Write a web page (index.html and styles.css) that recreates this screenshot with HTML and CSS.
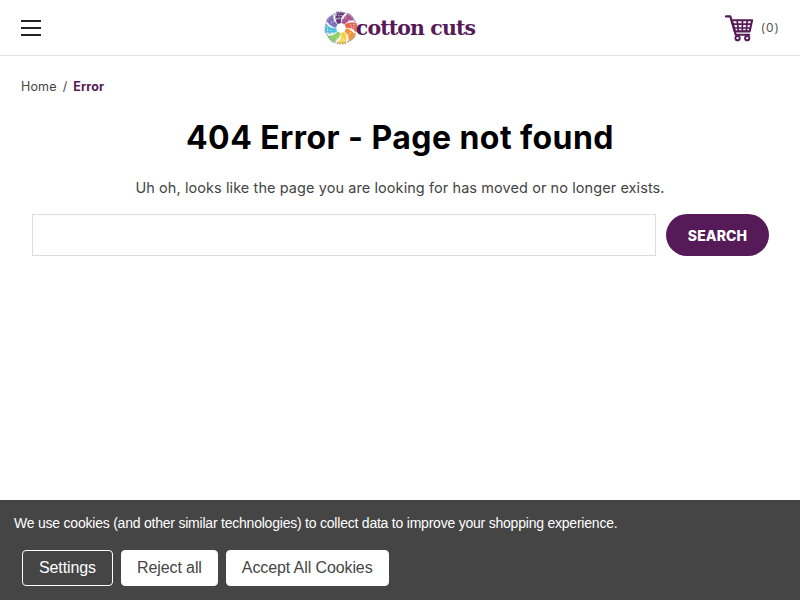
FILE: index.html
```html
<!DOCTYPE html>
<html lang="en">
<head>
<meta charset="utf-8">
<title>404 Error - Page not found</title>
<link rel="stylesheet" href="styles.css">
</head>
<body>
<header class="header">
  <button class="menu" aria-label="Menu"><span></span><span></span><span></span></button>
  <a class="logo" href="#">
    <svg class="wheel" viewBox="0 0 36 36" width="36" height="36" fill="none">
      <g stroke="#fff" stroke-width=".5">
        <path d="M18 13C19 8 22 5 26 3C29 5 31 8 32 11C28 10 24 11 22 15Z" fill="#a9578f"/>
        <path d="M18 13C19 8 22 5 26 3C29 5 31 8 32 11C28 10 24 11 22 15Z" transform="rotate(45 18 18)" fill="#e5654f"/>
        <path d="M18 13C19 8 22 5 26 3C29 5 31 8 32 11C28 10 24 11 22 15Z" transform="rotate(90 18 18)" fill="#f2953c"/>
        <path d="M18 13C19 8 22 5 26 3C29 5 31 8 32 11C28 10 24 11 22 15Z" transform="rotate(135 18 18)" fill="#f6cf44"/>
        <path d="M18 13C19 8 22 5 26 3C29 5 31 8 32 11C28 10 24 11 22 15Z" transform="rotate(180 18 18)" fill="#8fd16a"/>
        <path d="M18 13C19 8 22 5 26 3C29 5 31 8 32 11C28 10 24 11 22 15Z" transform="rotate(225 18 18)" fill="#52bfe0"/>
        <path d="M18 13C19 8 22 5 26 3C29 5 31 8 32 11C28 10 24 11 22 15Z" transform="rotate(270 18 18)" fill="#7f71bd"/>
        <path d="M18 13C19 8 22 5 26 3C29 5 31 8 32 11C28 10 24 11 22 15Z" transform="rotate(315 18 18)" fill="#5f3a78"/>
      </g>
      <circle cx="18" cy="18" r="15.500" stroke="#a79fb0" stroke-width="1.500" stroke-dasharray="1.500 1.200"/>
      <g stroke="#fff" stroke-width=".9" stroke-dasharray="1 1.300">
        <path d="M11 9l12-1M8 13l9-6M13 5l10 1M26 10l3 8M31 14l-1 8M28 22l-5 6M21 29l-8 0M24 30l-9 1M10 25l-3-6M5 23l-1-7"/>
      </g>
    </svg>
    <span class="logo-text">cotton cuts</span>
  </a>
  <a class="cart" href="#">
    <svg class="cart-icon" viewBox="0 0 30 28" width="29" height="28" fill="none" stroke="#561a59">
      <path d="M1 2h4.500l5.500 19h14" stroke-width="2.200" stroke-linecap="round" stroke-linejoin="round"/>
      <path d="M7 6h21l-2.500 11.500H10.300z" stroke-width="2.200" stroke-linejoin="round"/>
      <path d="M12.500 6l1.500 11.500M18 6v11.500M23 6l-1 11.500M8.300 10h19M9.500 14h17" stroke-width="1.800"/>
      <circle cx="13" cy="24.500" r="2.200" stroke-width="2"/>
      <circle cx="23" cy="24.500" r="2.200" stroke-width="2"/>
    </svg>
    <span class="cart-count">(0)</span>
  </a>
</header>
<main class="main">
  <nav class="crumbs"><a href="#">Home</a><span class="sep">/</span><strong>Error</strong></nav>
  <h1 class="title">404 Error - Page not found</h1>
  <p class="lead">Uh oh, looks like the page you are looking for has moved or no longer exists.</p>
  <form class="search">
    <input class="search-input" type="text" aria-label="Search">
    <button class="search-btn" type="button">SEARCH</button>
  </form>
</main>
<aside class="cookies">
  <p class="cookies-text">We use cookies (and other similar technologies) to collect data to improve your shopping experience.</p>
  <div class="cookies-actions">
    <button class="cbtn cbtn-ghost" type="button">Settings</button>
    <button class="cbtn" type="button">Reject all</button>
    <button class="cbtn" type="button">Accept All Cookies</button>
  </div>
</aside>
</body>
</html>
```
FILE: styles.css
```css
* { box-sizing: border-box; }
html, body { margin: 0; height: 100%; }
body { background: #fff; color: #333; font-family: "Open Sans", sans-serif; overflow: hidden; }
a { color: inherit; text-decoration: none; }

.header {
  height: 56px;
  border-bottom: 1px solid #e0e0e0;
  padding: 0 20px 0 21px;
  display: grid;
  grid-template-columns: 1fr auto 1fr;
  align-items: center;
}
.menu {
  width: 20px; height: 16px; padding: 0; border: 0; background: none;
  display: flex; flex-direction: column; justify-content: space-between;
}
.menu span { display: block; height: 2px; background: #222; }
.logo { display: flex; align-items: center; }
.wheel { display: block; margin: 0 -3px 0 -3px; }
.logo-text {
  font-family: "DejaVu Serif", serif; font-weight: 700; font-size: 20.500px;
  letter-spacing: -0.900px; color: #561a59;
}
.cart { justify-self: end; display: flex; align-items: center; gap: 7px; }
.cart-count { font-family: "Inter", sans-serif; font-size: 12px; color: #555; letter-spacing: 1px; }

.main { padding: 23px 21px 0; }
.crumbs { font-family: "Inter", sans-serif; font-size: 12.500px; line-height: 16px; color: #444; display: flex; letter-spacing: .15px; }
.sep { margin: 0 6px; }
.crumbs strong { color: #561a59; font-weight: 700; }
.title {
  margin: 21px 0 0; text-align: center; color: #000;
  font-family: "Inter", sans-serif; font-size: 32px; line-height: 44px; font-weight: 700; letter-spacing: .44px;
}
.lead { margin: 17px 0 0; text-align: center; font-family: "Inter", sans-serif; font-size: 14.500px; line-height: 21px; color: #444; letter-spacing: .08px; }
.search { display: flex; gap: 10px; margin: 16px 10px 0 11px; }
.search-input { flex: 1; height: 42px; border: 1px solid #dcdcdc; background: #fff; }
.search-btn {
  width: 103px; height: 42px; border: 0; border-radius: 21px; background: #561a59; color: #fff;
  font-family: "Inter", sans-serif; font-weight: 800; font-size: 14px; letter-spacing: .1px;
}

.cookies {
  position: fixed; left: 0; right: 0; bottom: 0; height: 100px;
  background: #454545; color: #fff; padding: 14px 14px 0;
  font-family: "Liberation Sans", Arial, sans-serif;
}
.cookies-text { margin: 0; font-size: 14px; line-height: 18px; letter-spacing: -.22px; }
.cookies-actions { display: flex; gap: 8px; margin: 18px 0 0 8px; }
.cbtn {
  height: 36px; padding: 0 15px; border: 1px solid #fff; border-radius: 4px; background: #fff; color: #454545;
  font-family: inherit; font-size: 16px; letter-spacing: -.1px;
}
.cbtn-ghost { padding: 0 16px; background: transparent; color: #fff; }
```
